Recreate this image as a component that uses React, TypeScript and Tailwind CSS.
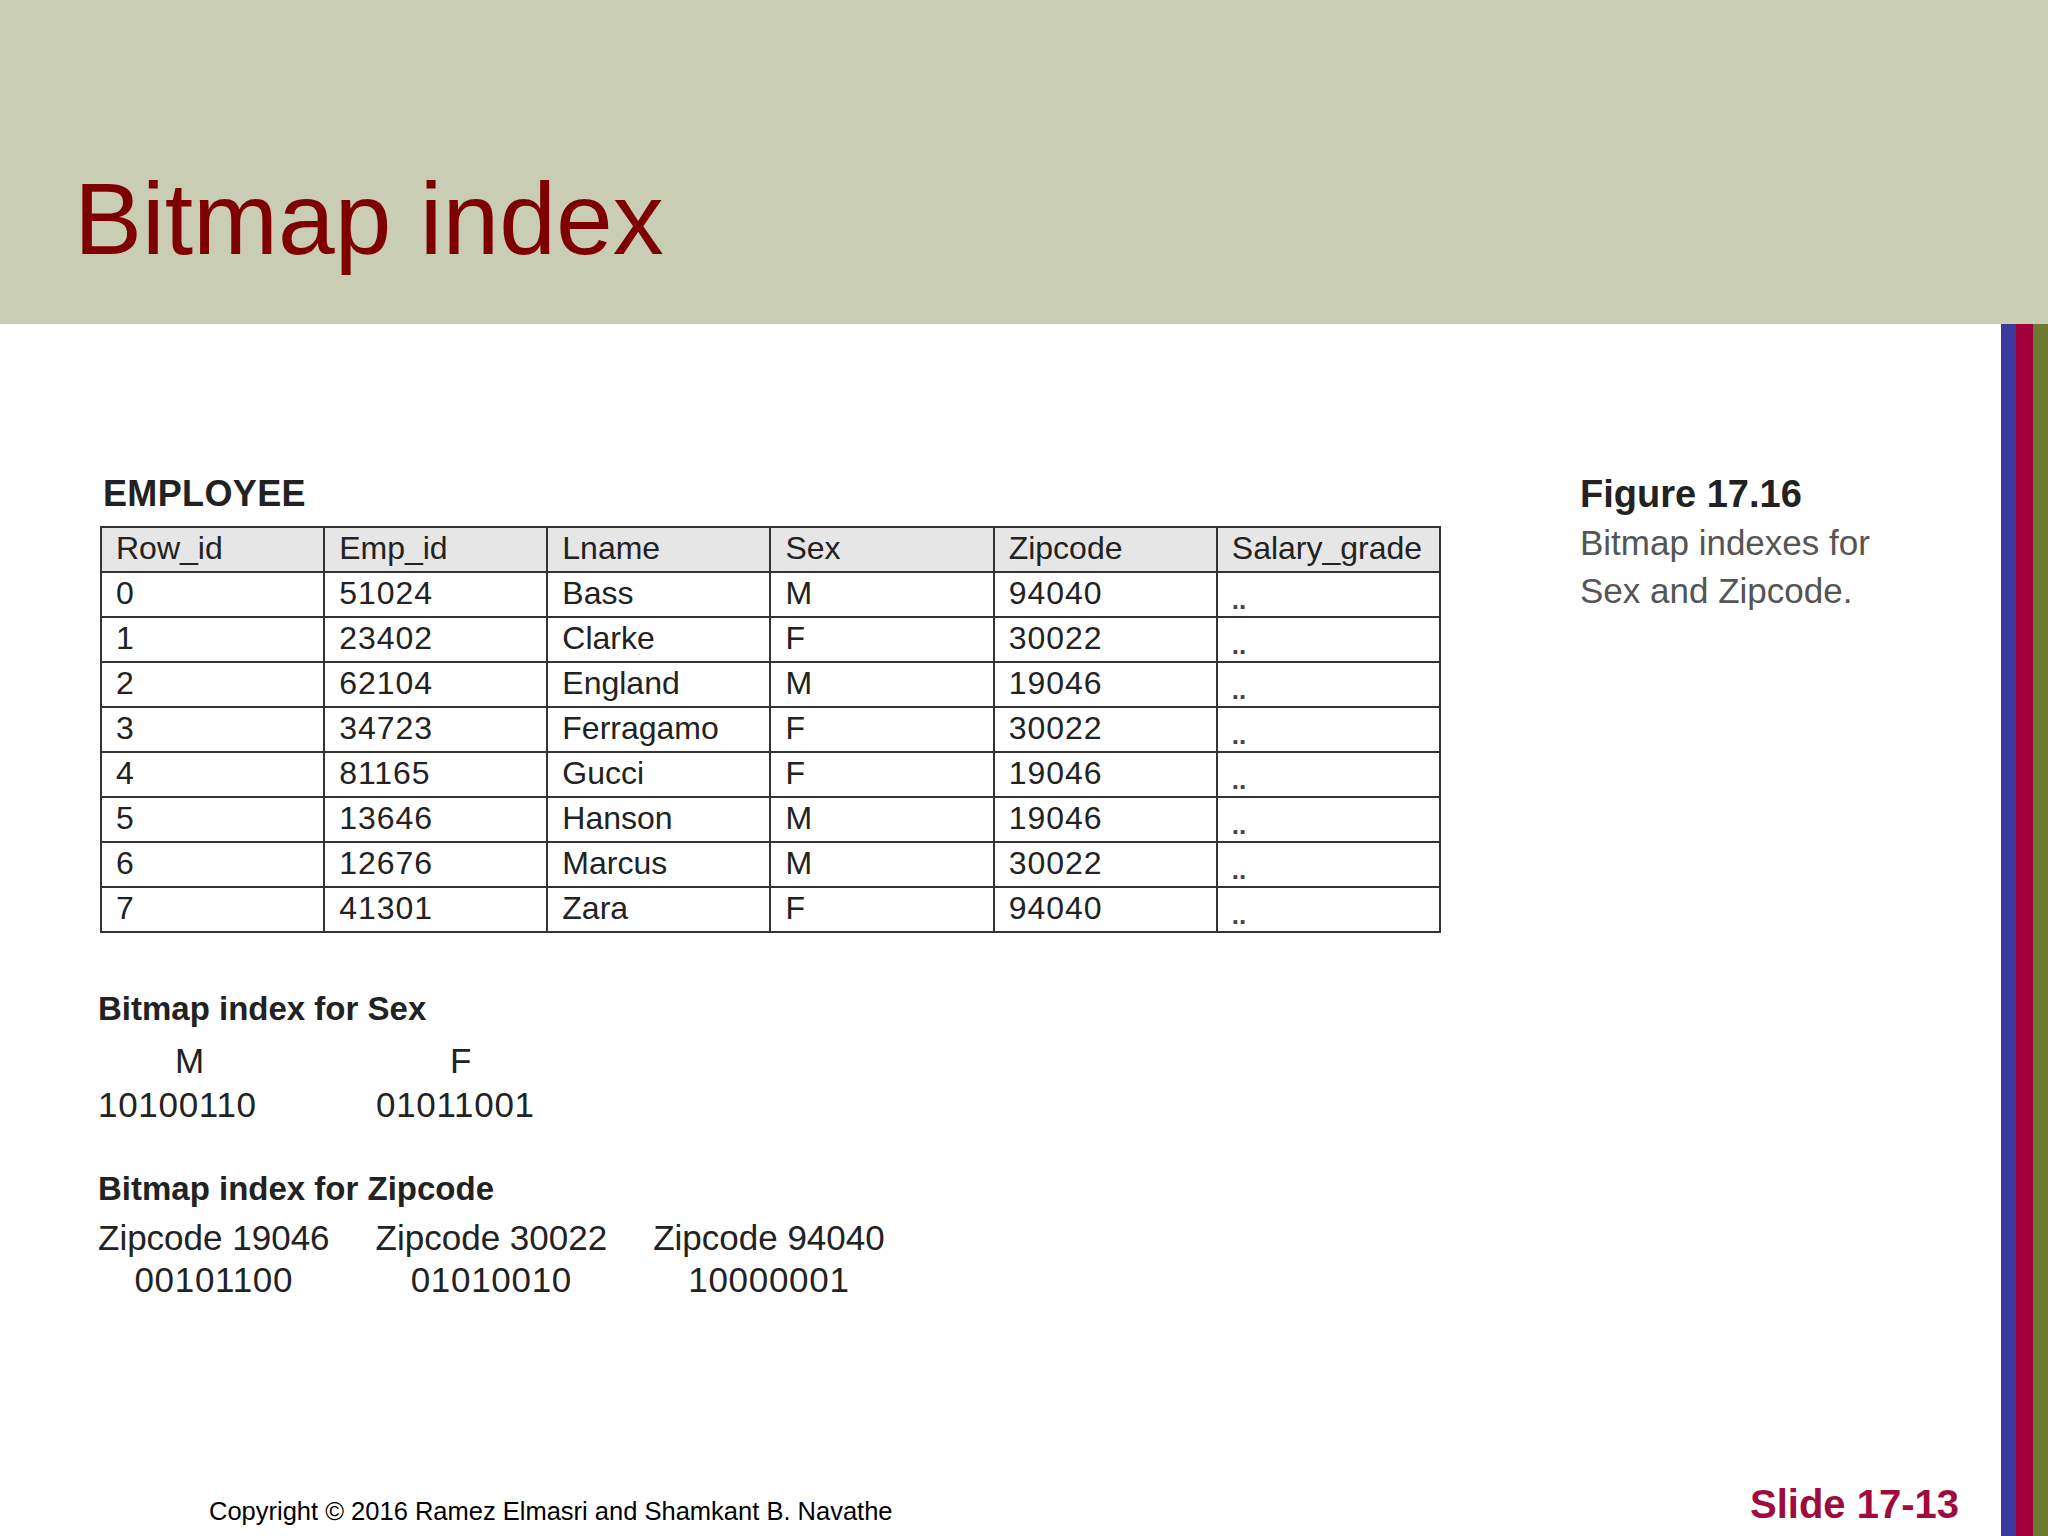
const FONT = "font-['Liberation_Sans',Arial,sans-serif]"

const HEAD = ['Row_id', 'Emp_id', 'Lname', 'Sex', 'Zipcode', 'Salary_grade']

const ROWS: [string, string, string, string, string][] = [
  ['0', '51024', 'Bass', 'M', '94040'],
  ['1', '23402', 'Clarke', 'F', '30022'],
  ['2', '62104', 'England', 'M', '19046'],
  ['3', '34723', 'Ferragamo', 'F', '30022'],
  ['4', '81165', 'Gucci', 'F', '19046'],
  ['5', '13646', 'Hanson', 'M', '19046'],
  ['6', '12676', 'Marcus', 'M', '30022'],
  ['7', '41301', 'Zara', 'F', '94040'],
]

const ZIPS = [
  { code: '19046', bits: '00101100' },
  { code: '30022', bits: '01010010' },
  { code: '94040', bits: '10000001' },
]

function EmployeeTable() {
  return (
    <table className="w-[1341px] border-collapse border-2 border-[#333] text-[32px] text-[#222]">
      <thead>
        <tr className="h-[45px] bg-[#e6e6e6]">
          {HEAD.map((h) => (
            <th key={h} className="w-[223px] border-2 border-[#333] pl-[14px] pb-[3px] text-left font-normal leading-none">
              {h}
            </th>
          ))}
        </tr>
      </thead>
      <tbody>
        {ROWS.map((r) => (
          <tr key={r[0]} className="h-[45px]">
            {r.map((c, i) => (
              <td
                key={i}
                className={i === 2 ? 'border-2 border-[#333] pl-[14px] pb-[3px] leading-none' : 'border-2 border-[#333] pl-[14px] pb-[3px] leading-none tracking-[0.03em]'}
              >
                {c}
              </td>
            ))}
            <td className="border-2 border-[#333] pl-[14px] pt-[10px] text-[26px] font-bold leading-none text-[#444]">..</td>
          </tr>
        ))}
      </tbody>
    </table>
  )
}

export default function App() {
  return (
    <div className={`w-[2048px] h-[1536px] flex flex-col bg-white overflow-hidden ${FONT}`}>
      <div className="h-[324px] shrink-0 bg-[#c8cdb3] flex items-end pl-[74px] pb-[54px]">
        <h1 className="text-[102px] leading-none text-[#7f0000]">Bitmap index</h1>
      </div>

      <div className="flex flex-1 min-h-0">
        <div className="flex-1 flex flex-col">
          <div className="flex flex-1">
            <div className="pl-[98px] pt-[152px] text-[#222]">
              <div className="pl-[5px] text-[36px] font-bold leading-none tracking-[0.01em]">EMPLOYEE</div>
              <div className="mt-[14px] ml-[2px]">
                <EmployeeTable />
              </div>

              <div className="mt-[59px] text-[33px] font-bold leading-none">Bitmap index for Sex</div>
              <div className="mt-[18px] flex text-[35px] leading-none">
                <div className="w-[278px] pl-[77px]">M</div>
                <div className="pl-[74px]">F</div>
              </div>
              <div className="mt-[9px] flex text-[35px] leading-none tracking-[0.02em]">
                <div className="w-[278px]">10100110</div>
                <div>01011001</div>
              </div>

              <div className="mt-[50px] text-[33px] font-bold leading-none">Bitmap index for Zipcode</div>
              <div className="mt-[15px] flex gap-[46px] text-[35px] leading-none">
                {ZIPS.map((z) => (
                  <div key={z.code} className="flex flex-col items-center">
                    <div>Zipcode {z.code}</div>
                    <div className="mt-[7px] tracking-[0.02em]">{z.bits}</div>
                  </div>
                ))}
              </div>
            </div>

            <div className="ml-auto mr-[111px] pt-[151px] w-[310px] text-[35px] leading-[48px] text-[#555]">
              <div className="text-[38px] font-bold text-[#222] leading-none">Figure 17.16</div>
              <div className="mt-[6px]">Bitmap indexes for</div>
              <div>Sex and Zipcode.</div>
            </div>
          </div>

          <div className="h-[60px] flex items-start pl-[209px] pr-[42px]">
            <div className="mt-[23px] text-[25.5px] text-black leading-none">
              Copyright © 2016 Ramez Elmasri and Shamkant B. Navathe
            </div>
            <div className="ml-auto mt-[8px] text-[40px] font-bold text-[#9e0b3c] leading-none">Slide 17-13</div>
          </div>
        </div>

        <div className="w-[47px] shrink-0 flex">
          <div className="w-[15px] bg-[#3b3a9c]" />
          <div className="w-[17px] bg-[#a1003a]" />
          <div className="flex-1 bg-[#6b7a30]" />
        </div>
      </div>
    </div>
  )
}
